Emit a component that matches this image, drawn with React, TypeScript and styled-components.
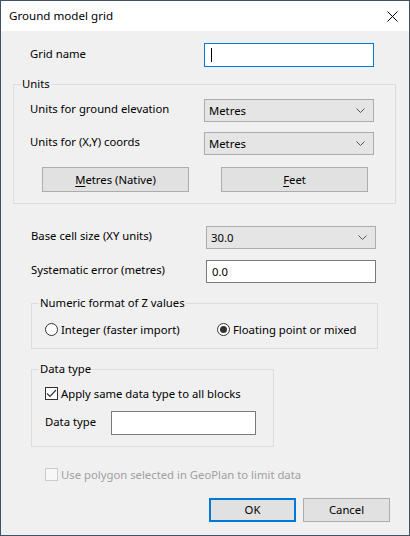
import React from "react"
import styled, { createGlobalStyle } from "styled-components"

const GlobalStyle = createGlobalStyle`
  html, body {
    margin: 0;
    padding: 0;
    background: #f0f0f0;
  }
  body {
    font-family: "Noto Sans", "Open Sans", sans-serif;
    font-size: 11.3px;
    color: #000;
  }
  * {
    box-sizing: border-box;
  }
`

const Window = styled.div`
  width: 410px;
  height: 536px;
  border: 1px solid #3f5266;
  background: #f0f0f0;
  display: flex;
  flex-direction: column;
  overflow: hidden;
`

const TitleBar = styled.div`
  height: 30px;
  background: #fff;
  display: flex;
  align-items: center;
  justify-content: space-between;
  padding: 0 10px 0 8px;
  flex-shrink: 0;
`

const Title = styled.span`
  font-size: 11.6px;
  padding-bottom: 1px;
`

const CloseIcon = styled.svg`
  width: 11px;
  height: 11px;
  margin-right: 1px;
`

const Client = styled.div`
  display: flex;
  flex-direction: column;
  flex: 1;
`

const Row = styled.div<{ $top: number; $left: number }>`
  display: flex;
  align-items: center;
  margin-top: ${(p) => p.$top}px;
  padding-left: ${(p) => p.$left}px;
`

const Label = styled.span<{ $width: number }>`
  width: ${(p) => p.$width}px;
  flex-shrink: 0;
  white-space: nowrap;
  margin-top: -4px;
`

const TextBox = styled.div<{ $width: number; $height?: number; $focused?: boolean }>`
  width: ${(p) => p.$width}px;
  height: ${(p) => p.$height ?? 23}px;
  background: #fff;
  border: 1px solid ${(p) => (p.$focused ? "#0078d7" : "#7a7a7a")};
  display: flex;
  align-items: center;
  padding-left: 5px;
  padding-bottom: 1px;
`

const Caret = styled.span`
  width: 1px;
  height: 14px;
  background: #000;
  margin-left: 1px;
`

const Select = styled.div<{ $width: number }>`
  width: ${(p) => p.$width}px;
  height: 23px;
  background: #e5e5e5;
  border: 1px solid #acacac;
  display: flex;
  align-items: center;
  justify-content: space-between;
  padding: 0 8px 1px 4px;
`

const Chevron = styled.svg`
  width: 9px;
  height: 5px;
`

const Group = styled.fieldset<{ $top: number; $left: number; $width: number; $bottom: number }>`
  margin: ${(p) => p.$top}px 0 0 ${(p) => p.$left}px;
  width: ${(p) => p.$width}px;
  border: 1px solid #dcdcdc;
  padding: 0 0 ${(p) => p.$bottom}px 0;
  min-inline-size: 0;
`

const Legend = styled.legend`
  margin-left: 7px;
  padding: 0 1px;
  line-height: 16px;
`

const ButtonRow = styled.div<{ $top: number; $left?: number; $gap: number; $right?: number; $end?: boolean }>`
  display: flex;
  gap: ${(p) => p.$gap}px;
  margin-top: ${(p) => p.$top}px;
  padding-left: ${(p) => p.$left ?? 0}px;
  padding-right: ${(p) => p.$right ?? 0}px;
  justify-content: ${(p) => (p.$end ? "flex-end" : "flex-start")};
`

const Button = styled.div<{ $width: number; $height: number; $default?: boolean }>`
  width: ${(p) => p.$width}px;
  height: ${(p) => p.$height}px;
  background: #e1e1e1;
  border: ${(p) => (p.$default ? "2px solid #0078d7" : "1px solid #adadad")};
  display: flex;
  align-items: center;
  justify-content: center;
  padding-bottom: 1px;
`

const Key = styled.span`
  text-decoration: underline;
  text-underline-offset: 2px;
`

const Option = styled.div<{ $width?: number; $disabled?: boolean }>`
  display: flex;
  align-items: center;
  gap: 3px;
  width: ${(p) => (p.$width ? `${p.$width}px` : "auto")};
  color: ${(p) => (p.$disabled ? "#a0a0a0" : "#000")};
  white-space: nowrap;
  height: 16px;
`

const Radio = styled.span<{ $checked?: boolean }>`
  width: 13px;
  height: 13px;
  border-radius: 50%;
  border: 1px solid #333;
  background: #fff;
  flex-shrink: 0;
  display: flex;
  align-items: center;
  justify-content: center;
  &::after {
    content: "";
    width: 7px;
    height: 7px;
    border-radius: 50%;
    background: ${(p) => (p.$checked ? "#333" : "transparent")};
  }
`

const Check = styled.span<{ $disabled?: boolean }>`
  width: 13px;
  height: 13px;
  border: 1px solid ${(p) => (p.$disabled ? "#cccccc" : "#333")};
  background: ${(p) => (p.$disabled ? "#f7f7f7" : "#fff")};
  flex-shrink: 0;
  display: flex;
  align-items: center;
  justify-content: center;
`

const ChevronDown = () => (
  <Chevron viewBox="0 0 9 5">
    <path d="M0.5 0.5 L4.5 4.5 L8.5 0.5" fill="none" stroke="#555" strokeWidth="1" />
  </Chevron>
)

const ComboBox = ({ value, width }: { value: string; width: number }) => (
  <Select $width={width}>
    <span>{value}</span>
    <ChevronDown />
  </Select>
)

export default function App() {
  return (
    <>
      <GlobalStyle />
      <Window>
        <TitleBar>
          <Title>Ground model grid</Title>
          <CloseIcon viewBox="0 0 11 11">
            <path d="M0.5 0.5 L10.5 10.5 M10.5 0.5 L0.5 10.5" stroke="#000" strokeWidth="1" />
          </CloseIcon>
        </TitleBar>
        <Client>
          <Row $top={12} $left={29}>
            <Label $width={174}>Grid name</Label>
            <TextBox $width={170} $height={24} $focused>
              <Caret />
            </TextBox>
          </Row>

          <Group $top={9} $left={12} $width={383} $bottom={11}>
            <Legend>Units</Legend>
            <Row $top={7} $left={16}>
              <Label $width={174}>Units for ground elevation</Label>
              <ComboBox value="Metres" width={170} />
            </Row>
            <Row $top={10} $left={16}>
              <Label $width={174}>Units for (X,Y) coords</Label>
              <ComboBox value="Metres" width={170} />
            </Row>
            <ButtonRow $top={12} $left={28} $gap={32}>
              <Button $width={147} $height={25}>
                <span>
                  <Key>M</Key>etres (Native)
                </span>
              </Button>
              <Button $width={147} $height={25}>
                <span>
                  <Key>F</Key>eet
                </span>
              </Button>
            </ButtonRow>
          </Group>

          <Row $top={22} $left={30}>
            <Label $width={175}>Base cell size (XY units)</Label>
            <ComboBox value="30.0" width={170} />
          </Row>
          <Row $top={11} $left={30}>
            <Label $width={175}>Systematic error (metres)</Label>
            <TextBox $width={170}>0.0</TextBox>
          </Row>

          <Group $top={12} $left={30} $width={347} $bottom={11}>
            <Legend>Numeric format of Z values</Legend>
            <Row $top={10} $left={13}>
              <Option $width={172}>
                <Radio />
                <span>Integer (faster import)</span>
              </Option>
              <Option>
                <Radio $checked />
                <span>Floating point or mixed</span>
              </Option>
            </Row>
          </Group>

          <Group $top={12} $left={30} $width={243} $bottom={11}>
            <Legend>Data type</Legend>
            <Row $top={8} $left={13}>
              <Option>
                <Check>
                  <svg width="11" height="9" viewBox="0 0 11 9">
                    <path d="M1 4.5 L4 7.5 L10 1" fill="none" stroke="#333" strokeWidth="1.2" />
                  </svg>
                </Check>
                <span>Apply same data type to all blocks</span>
              </Option>
            </Row>
            <Row $top={10} $left={13}>
              <Label $width={66}>Data type</Label>
              <TextBox $width={145} $height={24} />
            </Row>
          </Group>

          <Row $top={19} $left={44}>
            <Option $disabled>
              <Check $disabled />
              <span>Use polygon selected in GeoPlan to limit data</span>
            </Option>
          </Row>

          <ButtonRow $top={16} $gap={7} $right={19} $end>
            <Button $width={87} $height={24} $default>
              OK
            </Button>
            <Button $width={87} $height={24}>
              Cancel
            </Button>
          </ButtonRow>
        </Client>
      </Window>
    </>
  )
}
